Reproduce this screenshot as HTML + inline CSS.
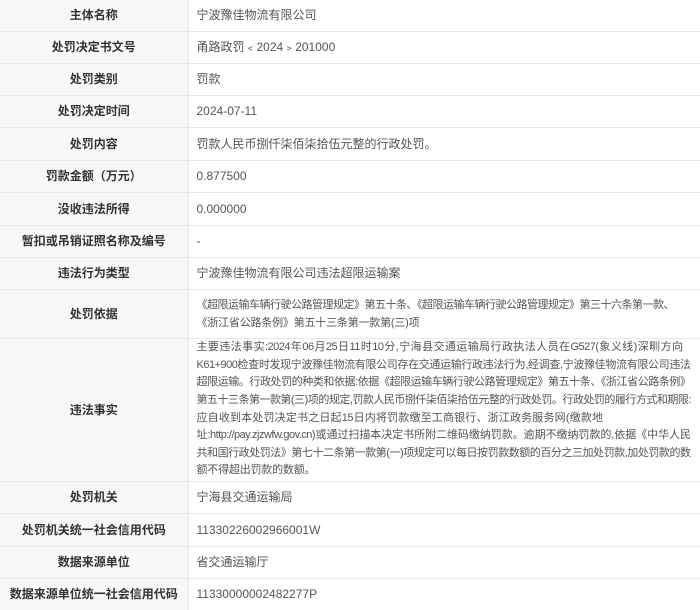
<!DOCTYPE html>
<html><head><meta charset="utf-8"><style>
html,body{margin:0;padding:0;background:#fff;width:700px;height:610px;overflow:hidden}
table{border-collapse:collapse;width:700px;table-layout:fixed;font-family:"Liberation Sans","Noto Sans CJK SC",sans-serif;font-size:12px}
td{border:1px solid #e6e8eb;padding:0 2px 0 8px;vertical-align:middle;line-height:18px;overflow:hidden}
td.l{background:#f7f8fa;color:#333;font-weight:bold;text-align:center;padding:0}
td.v{color:#555}
.j{white-space:nowrap;font-size:11px;letter-spacing:-0.5px;width:494px;text-align:justify;text-align-last:justify;text-justify:inter-character}
.k{white-space:nowrap;font-size:11px;letter-spacing:-0.2px}
tr:first-child td{border-top:none}
td:first-child{border-left:none}
</style></head><body>
<table>
<colgroup><col style="width:188px"><col style="width:512px"></colgroup>
<tr style="height:31px"><td class="l">主体名称</td><td class="v">宁波豫佳物流有限公司</td></tr>
<tr style="height:32px"><td class="l">处罚决定书文号</td><td class="v">甬路政罚﹤2024﹥201000</td></tr>
<tr style="height:32px"><td class="l">处罚类别</td><td class="v">罚款</td></tr>
<tr style="height:32px"><td class="l">处罚决定时间</td><td class="v">2024-07-11</td></tr>
<tr style="height:33px"><td class="l">处罚内容</td><td class="v">罚款人民币捌仟柒佰柒拾伍元整的行政处罚。</td></tr>
<tr style="height:32px"><td class="l">罚款金额（万元）</td><td class="v">0.877500</td></tr>
<tr style="height:33px"><td class="l">没收违法所得</td><td class="v">0.000000</td></tr>
<tr style="height:32px"><td class="l">暂扣或吊销证照名称及编号</td><td class="v">-</td></tr>
<tr style="height:32px"><td class="l">违法行为类型</td><td class="v">宁波豫佳物流有限公司违法超限运输案</td></tr>
<tr style="height:49px"><td class="l">处罚依据</td><td class="v"><div class="j" style="width:476px">《超限运输车辆行驶公路管理规定》第五十条、《超限运输车辆行驶公路管理规定》第三十六条第一款、</div><div class="k">《浙江省公路条例》第五十三条第一款第(三)项</div></td></tr>
<tr style="height:143px"><td class="l">违法事实</td><td class="v" style="line-height:17.6px"><div class="j" style="width:486px">主要违法事实:2024年06月25日11时10分,宁海县交通运输局行政执法人员在G527(象义线)深甽方向</div><div class="j">K61+900检查时发现宁波豫佳物流有限公司存在交通运输行政违法行为,经调查,宁波豫佳物流有限公司违法</div><div class="j">超限运输。行政处罚的种类和依据:依据《超限运输车辆行驶公路管理规定》第五十条、《浙江省公路条例》</div><div class="j">第五十三条第一款第(三)项的规定,罚款人民币捌仟柒佰柒拾伍元整的行政处罚。行政处罚的履行方式和期限:</div><div class="j" style="width:406px">应自收到本处罚决定书之日起15日内将罚款缴至工商银行、浙江政务服务网(缴款地</div><div class="j">址:http://pay.zjzwfw.gov.cn)或通过扫描本决定书所附二维码缴纳罚款。逾期不缴纳罚款的,依据《中华人民</div><div class="j">共和国行政处罚法》第七十二条第一款第(一)项规定可以每日按罚款数额的百分之三加处罚款,加处罚款的数</div><div class="k">额不得超出罚款的数额。</div></td></tr>
<tr style="height:32px"><td class="l">处罚机关</td><td class="v">宁海县交通运输局</td></tr>
<tr style="height:33px"><td class="l">处罚机关统一社会信用代码</td><td class="v">11330226002966001W</td></tr>
<tr style="height:32px"><td class="l">数据来源单位</td><td class="v">省交通运输厅</td></tr>
<tr style="height:32px"><td class="l">数据来源单位统一社会信用代码</td><td class="v">11330000002482277P</td></tr>
</table>
</body></html>
